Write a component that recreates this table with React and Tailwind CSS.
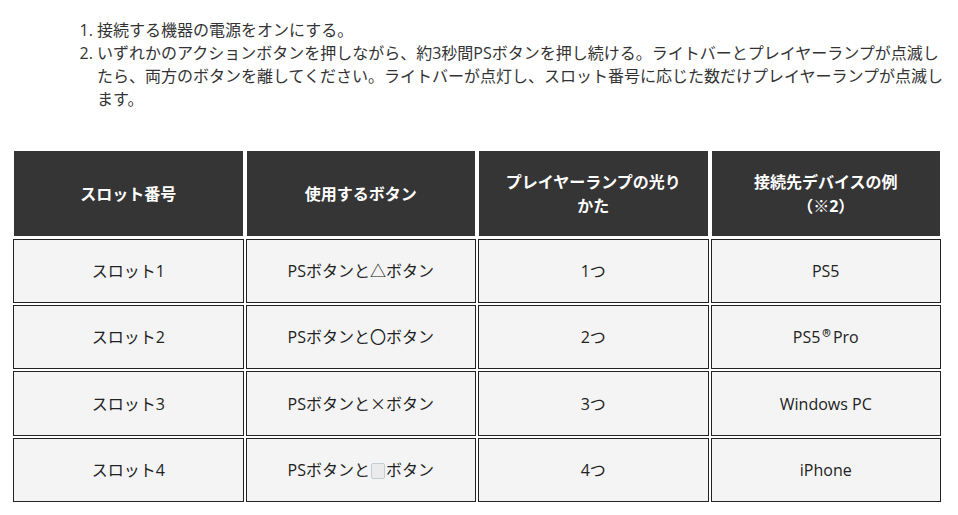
import React from "react";

const rows = [
  ["スロット1", <>PSボタンと△ボタン</>, "1つ", "PS5"],
  ["スロット2", <>PSボタンと〇ボタン</>, "2つ", <>PS5<span className="font-['Noto_Sans_CJK_JP',sans-serif] text-[18px] leading-none mx-[2px]">®</span>Pro</>],
  ["スロット3", <>PSボタンと<span className="font-['Noto_Sans_CJK_JP',sans-serif]">×</span>ボタン</>, "3つ", "Windows PC"],
  [
    "スロット4",
    <>
      PSボタンと
      <span className="inline-block w-[14px] h-[16px] align-[-3px] rounded-[2px] border border-[#c5ced8] bg-[#ebebeb] mx-[1px]"></span>
      ボタン
    </>,
    "4つ",
    "iPhone",
  ],
];

export default function App() {
  return (
    <div className="w-[958px] h-[515px] bg-white text-[#333] font-['Open_Sans','Noto_Sans_CJK_JP',sans-serif] text-[16px] overflow-hidden">
      <ol className="list-decimal ml-[97px] w-[852px] pt-[19px] leading-[23px]">
        <li>接続する機器の電源をオンにする。</li>
        <li>
          いずれかのアクションボタンを押しながら、約3秒間PSボタンを押し続ける。ライトバーとプレイヤーランプが点滅したら、両方のボタンを離してください。ライトバーが点灯し、スロット番号に応じた数だけプレイヤーランプが点滅します。
        </li>
      </ol>
      <table className="mt-[37px] ml-[11px] w-[932px] table-fixed border-separate border-spacing-[2px]">
        <thead>
          <tr>
            {[
              <>スロット番号</>,
              <>使用するボタン</>,
              <>プレイヤーランプの光り<br />かた</>,
              <>接続先デバイスの例<br />（※2）</>,
            ].map((h, i) => (
              <th
                key={i}
                className="bg-[#353535] text-white font-bold border border-white px-[20px] pt-[19px] pb-[18px] leading-6 text-center align-middle"
              >
                {h}
              </th>
            ))}
          </tr>
        </thead>
        <tbody>
          {rows.map((r, i) => (
            <tr key={i}>
              {r.map((c, j) => (
                <td
                  key={j}
                  className="bg-[#f4f4f4] text-[#222] border border-[#222] px-[20px] py-[19px] leading-6 text-center align-middle"
                >
                  {c}
                </td>
              ))}
            </tr>
          ))}
        </tbody>
      </table>
    </div>
  );
}
